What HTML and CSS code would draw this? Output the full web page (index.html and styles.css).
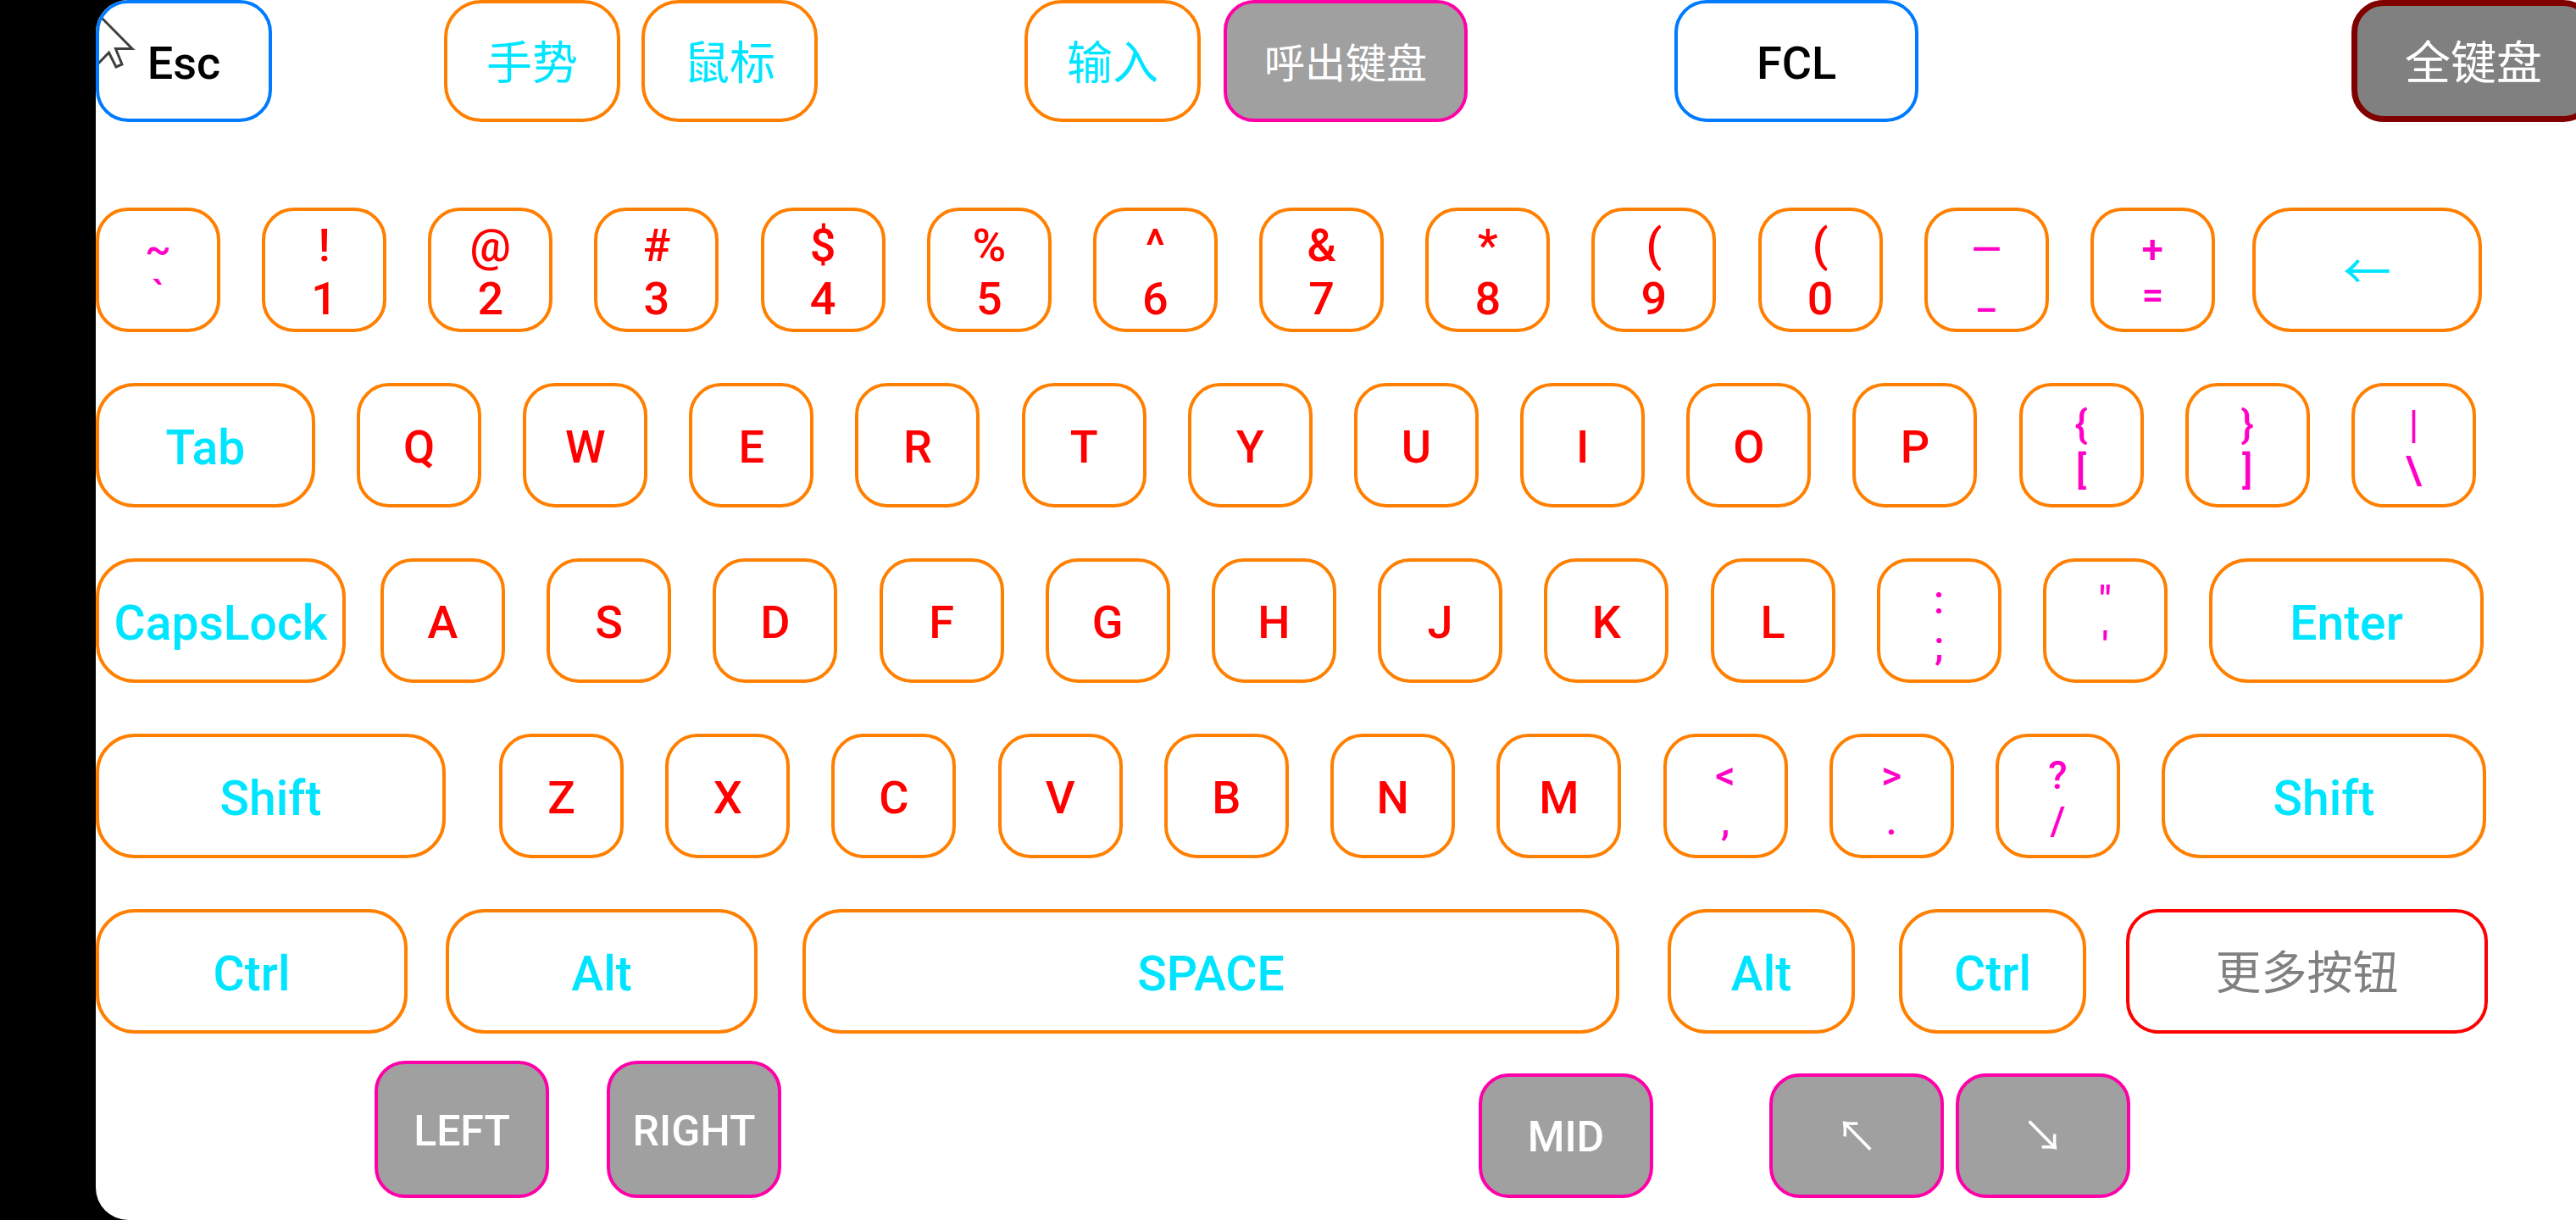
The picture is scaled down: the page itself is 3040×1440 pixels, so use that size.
FILE: index.html
```html
<!DOCTYPE html>
<html lang="zh-CN">
<head>
<meta charset="utf-8">
<title>全键盘</title>
<link rel="stylesheet" href="styles.css">
</head>
<body>
<main class="panel">
  <svg class="pointer" viewBox="0 0 48 84" aria-hidden="true"><path d="M2 16L43 57.5H23.500L31 76L24 79L15.500 62L2 76Z"/></svg>

  <div class="row row-top">
    <button class="key action esc">Esc</button>
    <div class="pair pair-mouse">
      <button class="key tool">手势</button>
      <button class="key tool">鼠标</button>
    </div>
    <div class="pair pair-input">
      <button class="key tool">输入</button>
      <button class="key mouse call">呼出键盘</button>
    </div>
    <button class="key action fcl">FCL</button>
    <button class="key full">全键盘</button>
  </div>

  <div class="row row-digits">
    <div class="keys">
      <button class="key sym"><span>~</span><span>`</span></button>
      <button class="key char"><span>!</span><span>1</span></button>
      <button class="key char"><span>@</span><span>2</span></button>
      <button class="key char"><span>#</span><span>3</span></button>
      <button class="key char"><span>$</span><span>4</span></button>
      <button class="key char"><span>%</span><span>5</span></button>
      <button class="key char"><span>^</span><span>6</span></button>
      <button class="key char"><span>&amp;</span><span>7</span></button>
      <button class="key char"><span>*</span><span>8</span></button>
      <button class="key char"><span>(</span><span>9</span></button>
      <button class="key char"><span>(</span><span>0</span></button>
      <button class="key sym"><span>—</span><span>_</span></button>
      <button class="key sym"><span>+</span><span>=</span></button>
    </div>
    <button class="key mod backspace">←</button>
  </div>

  <div class="row row-tab">
    <button class="key mod tab">Tab</button>
    <div class="keys">
      <button class="key char">Q</button>
      <button class="key char">W</button>
      <button class="key char">E</button>
      <button class="key char">R</button>
      <button class="key char">T</button>
      <button class="key char">Y</button>
      <button class="key char">U</button>
      <button class="key char">I</button>
      <button class="key char">O</button>
      <button class="key char">P</button>
      <button class="key sym"><span>{</span><span>[</span></button>
      <button class="key sym"><span>}</span><span>]</span></button>
      <button class="key sym"><span>|</span><span>\</span></button>
    </div>
  </div>

  <div class="row row-caps">
    <button class="key mod caps">CapsLock</button>
    <div class="keys">
      <button class="key char">A</button>
      <button class="key char">S</button>
      <button class="key char">D</button>
      <button class="key char">F</button>
      <button class="key char">G</button>
      <button class="key char">H</button>
      <button class="key char">J</button>
      <button class="key char">K</button>
      <button class="key char">L</button>
      <button class="key sym"><span>:</span><span>;</span></button>
      <button class="key sym"><span>"</span><span>'</span></button>
    </div>
    <button class="key mod enter">Enter</button>
  </div>

  <div class="row row-shift">
    <button class="key mod shift-left">Shift</button>
    <div class="keys">
      <button class="key char">Z</button>
      <button class="key char">X</button>
      <button class="key char">C</button>
      <button class="key char">V</button>
      <button class="key char">B</button>
      <button class="key char">N</button>
      <button class="key char">M</button>
      <button class="key sym"><span>&lt;</span><span>,</span></button>
      <button class="key sym"><span>&gt;</span><span>.</span></button>
      <button class="key sym"><span>?</span><span>/</span></button>
    </div>
    <button class="key mod shift-right">Shift</button>
  </div>

  <div class="row row-space">
    <button class="key mod wide">Ctrl</button>
    <button class="key mod wide alt-left">Alt</button>
    <button class="key mod space">SPACE</button>
    <button class="key mod medium alt-right">Alt</button>
    <button class="key mod medium ctrl-right">Ctrl</button>
    <button class="key more">更多按钮</button>
  </div>

  <div class="row row-mouse">
    <button class="key mouse tall">LEFT</button>
    <button class="key mouse tall right">RIGHT</button>
    <button class="key mouse mid">MID</button>
    <div class="pair pair-arrows">
      <button class="key mouse arrow">↖</button>
      <button class="key mouse arrow">↘</button>
    </div>
  </div>
</main>
</body>
</html>
```
FILE: styles.css
```css
* { box-sizing: border-box; }

body {
  margin: 0;
  background: #000;
  overflow: hidden;
}

.panel {
  position: relative;
  isolation: isolate;
  display: flex;
  flex-direction: column;
  gap: 60px;
  min-height: 100vh;
  margin-left: 113px;
  overflow: hidden;
  background: #fff;
  border-radius: 38px 0 0 38px;
}

.row { display: flex; }

.keys {
  display: flex;
  flex: 1;
  justify-content: space-between;
}

.pair { display: flex; }

.key {
  display: flex;
  flex: none;
  flex-direction: column;
  align-items: center;
  justify-content: center;
  width: 147px;
  height: 147px;
  margin: 0;
  padding: 4px 0 0;
  border: 4px solid #ff8000;
  border-radius: 38px;
  background: transparent;
  font-family: Roboto, "Noto Sans CJK SC", sans-serif;
  font-size: 54px;
  font-weight: 500;
  line-height: 63px;
  white-space: nowrap;
}

.char { color: #f00; }

.sym {
  color: #ff00c8;
  font-size: 46px;
  line-height: 54px;
}

.mod {
  padding-top: 6px;
  border-radius: 46px;
  color: #00e5ff;
  font-size: 57px;
}

/* Top row */
.row-top { margin-bottom: 41px; }
.row-top .key { height: 144px; }
.action { border-color: #007bff; color: #000; }
.esc { width: 208px; }
.tool { width: 208px; border-radius: 44px; color: #00e5ff; font-weight: 400; }
.pair-mouse { gap: 25px; margin-left: 203px; }
.pair-input { gap: 27px; margin-left: 244px; }
.fcl { width: 288px; margin-left: 244px; }
.full {
  width: 288px;
  margin-right: -23px;
  margin-left: auto;
  border: 7px solid #800000;
  background: #808080;
  color: #fff;
  font-weight: 400;
}

/* Mouse buttons */
.mouse {
  width: 206px;
  border-color: #ff00a8;
  border-radius: 36px;
  background: #a0a0a0;
  color: #fff;
  font-size: 50px;
}
.call { width: 288px; font-size: 48px; font-weight: 400; }

/* Letter rows */
.row-digits { gap: 44px; padding-right: 111px; }
.backspace { width: 271px; font-weight: 400; }

.row-tab { gap: 49px; padding-right: 118px; }
.tab { width: 259px; }

.row-caps { padding-right: 109px; }
.caps { width: 295px; margin-right: 41px; }
.enter { width: 324px; margin-left: 49px; }

.row-shift { padding-right: 106px; }
.shift-left { width: 413px; margin-right: 63px; }
.shift-right { width: 383px; margin-left: 49px; }

/* Space row */
.row-space { padding-right: 104px; }
.wide { width: 368px; }
.medium { width: 221px; }
.alt-left { margin-left: 45px; }
.space { flex: 1; margin-left: 53px; }
.alt-right { margin-left: 57px; }
.ctrl-right { margin-left: 52px; }
.more {
  width: 427px;
  margin-left: 47px;
  border-color: #f00;
  color: #808080;
  font-weight: 400;
}

.tool,
.call,
.full,
.more { padding-top: 6px; }

/* Bottom row */
.row-mouse {
  align-items: flex-end;
  margin-top: -28px;
  padding: 0 526px 0 329px;
}
.tall { height: 162px; }
.right { margin-left: 68px; }
.mid { margin-left: auto; }
.pair-arrows { gap: 14px; margin-left: 137px; }
.arrow { font-weight: 400; }

.pointer {
  position: absolute;
  z-index: -1;
  top: 0;
  left: 0;
  width: 48px;
  height: 84px;
  fill: #fff;
  stroke: #404040;
  stroke-width: 3;
}
```
